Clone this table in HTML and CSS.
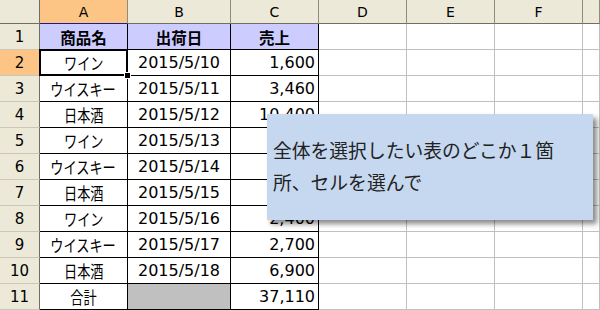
FILE: index.html
```html
<!DOCTYPE html>
<html lang="ja">
<head>
    <meta charset="UTF-8">
    <title>売上表</title>
    <link rel="stylesheet" href="styles.css">
</head>
<body>
    <div class="sheet">
        <div class="row head-row">
            <div class="corner"></div>
            <div class="col-head active">A</div>
            <div class="col-head">B</div>
            <div class="col-head">C</div>
            <div class="col-head">D</div>
            <div class="col-head">E</div>
            <div class="col-head">F</div>
            <div class="col-head"></div>
        </div>
        <div class="row">
            <div class="row-head">1</div>
            <div class="cell data title">商品名</div>
            <div class="cell data title">出荷日</div>
            <div class="cell data title">売上</div>
            <div class="cell"></div><div class="cell"></div><div class="cell"></div><div class="cell"></div>
        </div>
        <div class="row">
            <div class="row-head active">2</div>
            <div class="cell data selected"><span class="jp">ワイン</span><span class="handle"></span></div>
            <div class="cell data">2015/5/10</div>
            <div class="cell data num">1,600</div>
            <div class="cell"></div><div class="cell"></div><div class="cell"></div><div class="cell"></div>
        </div>
        <div class="row">
            <div class="row-head">3</div>
            <div class="cell data"><span class="jp">ウイスキー</span></div>
            <div class="cell data">2015/5/11</div>
            <div class="cell data num">3,460</div>
            <div class="cell"></div><div class="cell"></div><div class="cell"></div><div class="cell"></div>
        </div>
        <div class="row">
            <div class="row-head">4</div>
            <div class="cell data"><span class="jp">日本酒</span></div>
            <div class="cell data">2015/5/12</div>
            <div class="cell data num">10,400</div>
            <div class="cell"></div><div class="cell"></div><div class="cell"></div><div class="cell"></div>
        </div>
        <div class="row">
            <div class="row-head">5</div>
            <div class="cell data"><span class="jp">ワイン</span></div>
            <div class="cell data">2015/5/13</div>
            <div class="cell data num">4,300</div>
            <div class="cell"></div><div class="cell"></div><div class="cell"></div><div class="cell"></div>
        </div>
        <div class="row">
            <div class="row-head">6</div>
            <div class="cell data"><span class="jp">ウイスキー</span></div>
            <div class="cell data">2015/5/14</div>
            <div class="cell data num">2,950</div>
            <div class="cell"></div><div class="cell"></div><div class="cell"></div><div class="cell"></div>
        </div>
        <div class="row">
            <div class="row-head">7</div>
            <div class="cell data"><span class="jp">日本酒</span></div>
            <div class="cell data">2015/5/15</div>
            <div class="cell data num">2,400</div>
            <div class="cell"></div><div class="cell"></div><div class="cell"></div><div class="cell"></div>
        </div>
        <div class="row">
            <div class="row-head">8</div>
            <div class="cell data"><span class="jp">ワイン</span></div>
            <div class="cell data">2015/5/16</div>
            <div class="cell data num">2,400</div>
            <div class="cell"></div><div class="cell"></div><div class="cell"></div><div class="cell"></div>
        </div>
        <div class="row">
            <div class="row-head">9</div>
            <div class="cell data"><span class="jp">ウイスキー</span></div>
            <div class="cell data">2015/5/17</div>
            <div class="cell data num">2,700</div>
            <div class="cell"></div><div class="cell"></div><div class="cell"></div><div class="cell"></div>
        </div>
        <div class="row">
            <div class="row-head">10</div>
            <div class="cell data"><span class="jp">日本酒</span></div>
            <div class="cell data">2015/5/18</div>
            <div class="cell data num">6,900</div>
            <div class="cell"></div><div class="cell"></div><div class="cell"></div><div class="cell"></div>
        </div>
        <div class="row">
            <div class="row-head">11</div>
            <div class="cell data"><span class="jp">合計</span></div>
            <div class="cell data blank"></div>
            <div class="cell data num">37,110</div>
            <div class="cell"></div><div class="cell"></div><div class="cell"></div><div class="cell"></div>
        </div>
    </div>

    <div class="note">全体を選択したい表のどこか１箇<br>所、セルを選んで</div>
</body>
</html>
```

FILE: styles.css
```css
body {
    margin: 0;
    background: #fff;
    overflow: hidden;
    font-family: "DejaVu Sans", "Noto Sans CJK JP", sans-serif;
    font-size: 15px;
    color: #000;
}
.sheet {
    width: 600px;
}
.row {
    display: grid;
    grid-template-columns: 40px 88px 103px 88px 88px 88px 88px 1fr;
    height: 26px;
}
.head-row {
    height: 24px;
}
.row > div {
    box-sizing: border-box;
    display: flex;
    align-items: center;
    justify-content: center;
    white-space: nowrap;
}

/* column and row headers */
.corner, .col-head, .row-head {
    background: #ece9d8;
}
.col-head {
    font-size: 14px;
    border-right: 1px solid #8f8c79;
    border-bottom: 1px solid #716f64;
}
.corner {
    border-right: 1px solid #716f64;
    border-bottom: 1px solid #716f64;
}
.row-head {
    border-right: 1px solid #716f64;
    border-bottom: 1px solid #cbc7b8;
}
.col-head.active, .row-head.active {
    background: #fcc586;
}
.col-head.active {
    border-bottom-color: #1b1b8c;
}
.row-head.active {
    border-right-color: #1b1b8c;
}

/* cells */
.cell {
    border-right: 1px solid #c0c0c0;
    border-bottom: 1px solid #c0c0c0;
}
.cell.data {
    border-right-color: #000;
    border-bottom-color: #000;
    font-size: 16px;
}
.cell.title {
    background: #ccccff;
    font-family: "Noto Sans CJK JP", sans-serif;
    font-weight: bold;
    font-size: 15.5px;
}
.jp {
    display: inline-block;
    font-family: "Noto Sans CJK JP", sans-serif;
    font-size: 16.5px;
    transform: scaleX(0.8);
}
.cell.num {
    justify-content: flex-end;
    padding-right: 3px;
}
.cell.blank {
    background: #c0c0c0;
}
.cell.selected {
    position: relative;
}
.cell.selected::after {
    content: "";
    position: absolute;
    left: -1px;
    top: -1px;
    right: -1px;
    bottom: -1px;
    border: 2px solid #000;
}
.handle {
    position: absolute;
    right: -4px;
    bottom: -4px;
    width: 5px;
    height: 5px;
    background: #000;
    border: 1px solid #fff;
    z-index: 1;
}

/* callout box */
.note {
    position: absolute;
    left: 267px;
    top: 114px;
    width: 326px;
    height: 106px;
    box-sizing: border-box;
    padding: 20px 0 0 6px;
    background: #c6d8f0;
    box-shadow: 4px 4px 5px rgba(0, 0, 0, 0.45);
    font-family: "Noto Sans CJK JP", sans-serif;
    font-size: 18.8px;
    line-height: 32px;
    color: #222;
}
```
